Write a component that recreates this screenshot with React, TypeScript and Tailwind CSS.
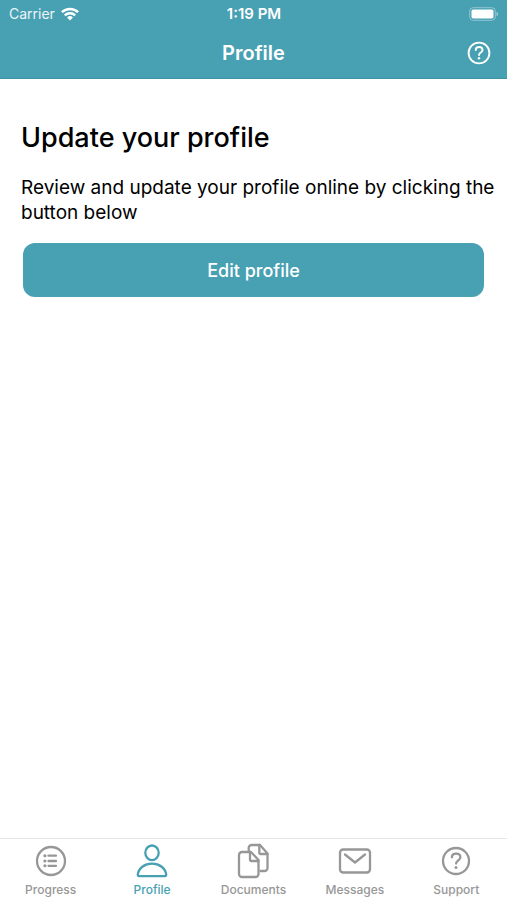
import { useState, type ReactNode } from 'react'

type TabKey = 'progress' | 'profile' | 'documents' | 'messages' | 'support'

const tabs: { key: TabKey; label: string; icon: ReactNode }[] = [
  {
    key: 'progress',
    label: 'Progress',
    icon: (
      <>
        <circle cx="18" cy="18" r="14" />
        <path d="M15.5 12.7H23M15.5 18H23M15.5 22.8H23" />
        <path d="M11.8 12.7h.2M11.8 18h.2M11.8 22.8h.2" strokeWidth="3" />
      </>
    ),
  },
  {
    key: 'profile',
    label: 'Profile',
    icon: (
      <>
        <ellipse cx="18" cy="9.8" rx="6.7" ry="7.3" />
        <path d="M5 33.2a1.2 1.2 0 0 1-1.2-1.4C4.5 25.2 10.5 20.7 18 20.7s13.5 4.5 14.2 11.1a1.2 1.2 0 0 1-1.2 1.4z" />
      </>
    ),
  },
  {
    key: 'documents',
    label: 'Documents',
    icon: (
      <>
        <path d="M13.7 8V5a3 3 0 0 1 3-3H25l7.500 8.500V25a3 3 0 0 1-3 3h-4" />
        <path d="M24.300 2v7.500a1.500 1.500 0 0 0 1.500 1.500H32.500" />
        <path d="M16 9H7a3 3 0 0 0-3 3v19a3 3 0 0 0 3 3h13.500a3 3 0 0 0 3-3V17z" />
        <path d="M15 9v7.500a1.500 1.500 0 0 0 1.500 1.500h7" />
      </>
    ),
  },
  {
    key: 'messages',
    label: 'Messages',
    icon: (
      <>
        <rect x="3" y="6.5" width="30" height="23" rx="3.2" />
        <path d="M8 11.5l10 8 10-8" />
      </>
    ),
  },
  {
    key: 'support',
    label: 'Support',
    icon: <HelpShape />,
  },
]

function HelpShape() {
  return (
    <>
      <circle cx="18" cy="18" r="13" />
      <path d="M13.9 14.3c0-2.4 1.8-3.7 4.2-3.7s4.3 1.3 4.3 3.6c0 3.3-4.3 3.2-4.3 6.3" />
      <circle cx="18" cy="24.5" r="1.5" fill="currentColor" stroke="none" />
    </>
  )
}

function StatusBar() {
  return (
    <div className="grid h-7 grid-cols-3 items-center pr-2 pl-[9px]">
      <div className="flex items-center gap-1.5 text-sm text-white/90">
        <span>Carrier</span>
        <svg viewBox="0 0 18 14" className="h-3.5 w-[18px]" fill="none" stroke="white" strokeWidth="2.5">
          <path d="M.9 5.2a11.7 11.7 0 0 1 16.2 0" />
          <path d="M3.8 8.3a7.5 7.5 0 0 1 10.4 0" />
          <path d="M9 13.5l-2.9-3a4.2 4.2 0 0 1 5.8 0z" fill="white" stroke="none" />
        </svg>
      </div>
      <span className="text-center text-[15px] font-semibold">1:19 PM</span>
      <svg viewBox="0 0 30 14" className="h-3.5 w-[30px] justify-self-end" fill="none">
        <rect x=".7" y=".7" width="25.6" height="12.6" rx="3.5" stroke="white" strokeOpacity=".4" />
        <rect x="2.5" y="2.5" width="22" height="9" rx="1.8" fill="white" />
        <path d="M27.5 5v4c1-.3 1.5-1.1 1.5-2s-.5-1.7-1.5-2z" fill="white" fillOpacity=".5" />
      </svg>
    </div>
  )
}

export default function App() {
  const [active, setActive] = useState<TabKey>('profile')

  return (
    <div className="flex min-h-screen flex-col bg-white font-['Inter',sans-serif] text-black">
      <header className="border-b border-[#3f92a4] bg-[#48a0b3] text-white">
        <StatusBar />
        <div className="grid h-[50px] grid-cols-[1fr_auto_1fr] items-center px-4">
          <h1 className="col-start-2 text-xl font-semibold">Profile</h1>
          <button aria-label="Help" className="justify-self-end">
            <svg
              viewBox="3 3 30 30"
              className="size-6"
              fill="none"
              stroke="currentColor"
              strokeWidth="2.4"
              strokeLinecap="round"
            >
              <HelpShape />
            </svg>
          </button>
        </div>
      </header>

      <main className="flex-1 pt-[41px]">
        <h2 className="px-[21px] text-[27px] leading-9 font-medium">Update your profile</h2>
        <p className="mt-[19px] pr-2 pl-[21px] text-[19px] leading-[25px]">
          Review and update your profile online by clicking the button below
        </p>
        <div className="mt-[18px] px-[23px]">
          <button className="h-[54px] w-full rounded-xl bg-[#48a0b3] pt-0.5 text-lg font-medium text-white">
            Edit profile
          </button>
        </div>
      </main>

      <nav className="grid grid-cols-5 border-t border-gray-200 bg-white pt-1 pb-0.5">
        {tabs.map((tab) => (
          <button
            key={tab.key}
            onClick={() => setActive(tab.key)}
            aria-current={active === tab.key ? 'page' : undefined}
            className={`flex flex-col items-center gap-[3px] ${
              active === tab.key ? 'text-[#48a0b3]' : 'text-[#979797]'
            }`}
          >
            <svg
              viewBox="0 0 36 36"
              className="size-9"
              fill="none"
              stroke="currentColor"
              strokeWidth="2.3"
              strokeLinecap="round"
              strokeLinejoin="round"
            >
              {tab.icon}
            </svg>
            <span className="text-xs font-medium">{tab.label}</span>
          </button>
        ))}
      </nav>
    </div>
  )
}
